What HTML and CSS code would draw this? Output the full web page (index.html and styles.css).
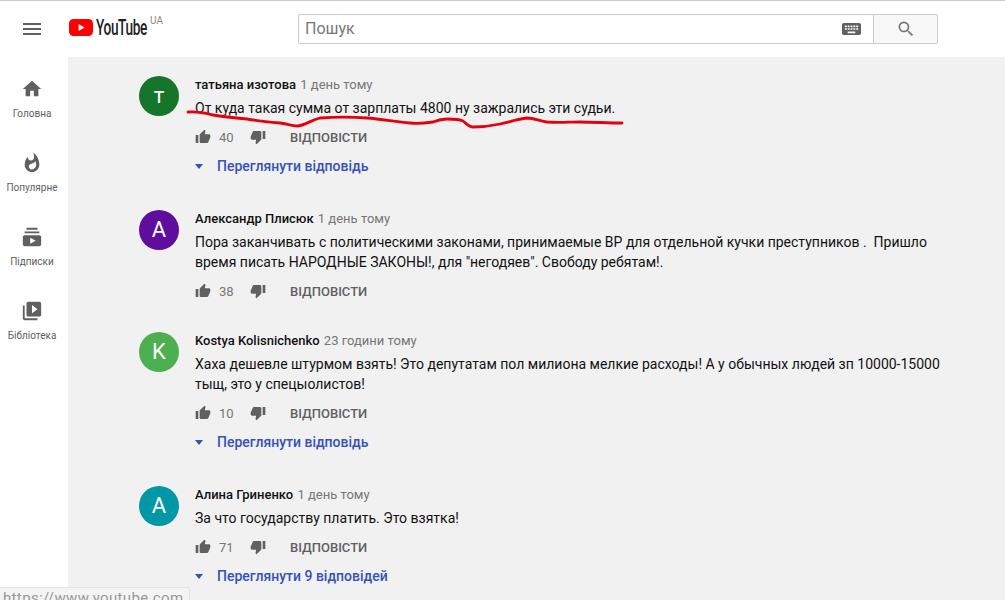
FILE: index.html
```html
<!DOCTYPE html>
<html lang="en">
<head>
    <meta charset="UTF-8">
    <meta name="viewport" content="width=device-width, initial-scale=1.0">
    <title>YouTube</title>
    <link rel="stylesheet" href="styles.css">
</head>
<body>
    <header class="topbar">
        <svg class="menu-icon" viewBox="0 0 24 24"><path d="M3 18h18v-2H3v2zm0-5h18v-2H3v2zm0-7v2h18V6H3z"/></svg>
        <div class="logo">
            <svg class="logo-mark" viewBox="0 0 24 17"><rect width="24" height="17" rx="4.5" fill="#f00"/><path d="M9.6 5v7l6-3.5z" fill="#fff"/></svg>
            <span class="logo-text">YouTube</span>
            <span class="logo-country">UA</span>
        </div>
        <form class="search">
            <div class="search-box">
                <input class="search-input" type="text" placeholder="Пошук">
                <svg class="keyboard-icon" viewBox="2 5 20 14" preserveAspectRatio="none"><path d="M20 5H4c-1.1 0-1.99.9-1.99 2L2 17c0 1.1.9 2 2 2h16c1.1 0 2-.9 2-2V7c0-1.1-.9-2-2-2zm-9 3h2v2h-2V8zm0 3h2v2h-2v-2zM8 8h2v2H8V8zm0 3h2v2H8v-2zm-1 2H5v-2h2v2zm0-3H5V8h2v2zm9 7H8v-2h8v2zm0-4h-2v-2h2v2zm0-3h-2V8h2v2zm3 3h-2v-2h2v2zm0-3h-2V8h2v2z"/></svg>
            </div>
            <button class="search-button" type="button">
                <svg viewBox="0 0 24 24"><path d="M15.5 14h-.79l-.28-.27A6.471 6.471 0 0 0 16 9.5 6.5 6.5 0 1 0 9.5 16c1.61 0 3.09-.59 4.23-1.57l.27.28v.79l5 4.99L20.49 19l-4.99-5zm-6 0C7.01 14 5 11.99 5 9.5S7.01 5 9.5 5 14 7.01 14 9.5 11.99 14 9.5 14z"/></svg>
            </button>
        </form>
    </header>

    <div class="page">
        <nav class="sidebar">
            <a class="nav-item">
                <svg viewBox="0 0 24 24"><path d="M10 20v-6h4v6h5v-8h3L12 3 2 12h3v8z"/></svg>
                <span>Головна</span>
            </a>
            <a class="nav-item">
                <svg viewBox="0 0 24 24"><path d="M13.5.67s.74 2.65.74 4.8c0 2.06-1.35 3.73-3.41 3.73-2.07 0-3.63-1.67-3.63-3.73l.03-.36C5.21 7.51 4 10.62 4 14c0 4.42 3.58 8 8 8s8-3.58 8-8C20 8.61 17.41 3.8 13.5.67zM11.71 19c-1.78 0-3.22-1.4-3.22-3.14 0-1.62 1.05-2.76 2.81-3.12 1.77-.36 3.6-1.21 4.62-2.58.39 1.29.59 2.65.59 4.04 0 2.65-2.15 4.8-4.8 4.8z"/></svg>
                <span>Популярне</span>
            </a>
            <a class="nav-item">
                <svg viewBox="0 0 24 24"><path d="M20 8H4V6h16v2zm-2-6H6v2h12V2zm4 10v8c0 1.1-.9 2-2 2H4c-1.1 0-2-.9-2-2v-8c0-1.1.9-2 2-2h16c1.1 0 2 .9 2 2zm-6 4l-6-3.27v6.53L16 16z"/></svg>
                <span>Підписки</span>
            </a>
            <a class="nav-item">
                <svg viewBox="0 0 24 24"><path d="M4 6H2v14c0 1.1.9 2 2 2h14v-2H4V6zm16-4H8c-1.1 0-2 .9-2 2v12c0 1.1.9 2 2 2h12c1.1 0 2-.9 2-2V4c0-1.1-.9-2-2-2zm-8 12.5v-9l6 4.5-6 4.5z"/></svg>
                <span>Бібліотека</span>
            </a>
        </nav>

        <main class="comments">
            <article class="comment">
                <div class="avatar avatar-green">т</div>
                <div class="comment-body">
                    <div class="comment-head"><b>татьяна изотова</b> <span>1 день тому</span></div>
                    <p class="comment-text">От куда такая сумма от зарплаты 4800 ну зажрались эти судьи.</p>
                    <div class="toolbar">
                        <svg class="thumb" viewBox="0 0 24 24"><path d="M1 21h4V9H1v12zm22-11c0-1.1-.9-2-2-2h-6.31l.95-4.57.03-.32c0-.41-.17-.79-.44-1.06L14.17 1 7.59 7.59C7.22 7.95 7 8.45 7 9v10c0 1.1.9 2 2 2h9c.83 0 1.54-.5 1.84-1.22l3.02-7.05c.09-.23.14-.47.14-.73v-2z"/></svg>
                        <span class="count">40</span>
                        <svg class="thumb thumb-down" viewBox="0 0 24 24"><path d="M15 3H6c-.83 0-1.54.5-1.84 1.22l-3.02 7.05c-.09.23-.14.47-.14.73v2c0 1.1.9 2 2 2h6.31l-.95 4.57-.03.32c0 .41.17.79.44 1.06L9.83 23l6.59-6.59c.36-.36.58-.86.58-1.41V5c0-1.1-.9-2-2-2zm4 0v12h4V3h-4z"/></svg>
                        <span class="reply">ВІДПОВІСТИ</span>
                    </div>
                    <div class="replies"><i class="arrow"></i>Переглянути відповідь</div>
                </div>
            </article>

            <article class="comment">
                <div class="avatar avatar-purple">А</div>
                <div class="comment-body">
                    <div class="comment-head"><b>Александр Плисюк</b> <span>1 день тому</span></div>
                    <p class="comment-text">Пора заканчивать с политическими законами, принимаемые ВР для отдельной кучки преступников .&nbsp; Пришло время писать НАРОДНЫЕ ЗАКОНЫ!, для "негодяев". Свободу ребятам!.</p>
                    <div class="toolbar">
                        <svg class="thumb" viewBox="0 0 24 24"><path d="M1 21h4V9H1v12zm22-11c0-1.1-.9-2-2-2h-6.31l.95-4.57.03-.32c0-.41-.17-.79-.44-1.06L14.17 1 7.59 7.59C7.22 7.95 7 8.45 7 9v10c0 1.1.9 2 2 2h9c.83 0 1.54-.5 1.84-1.22l3.02-7.05c.09-.23.14-.47.14-.73v-2z"/></svg>
                        <span class="count">38</span>
                        <svg class="thumb thumb-down" viewBox="0 0 24 24"><path d="M15 3H6c-.83 0-1.54.5-1.84 1.22l-3.02 7.05c-.09.23-.14.47-.14.73v2c0 1.1.9 2 2 2h6.31l-.95 4.57-.03.32c0 .41.17.79.44 1.06L9.83 23l6.59-6.59c.36-.36.58-.86.58-1.41V5c0-1.1-.9-2-2-2zm4 0v12h4V3h-4z"/></svg>
                        <span class="reply">ВІДПОВІСТИ</span>
                    </div>
                </div>
            </article>

            <article class="comment">
                <div class="avatar avatar-lime">K</div>
                <div class="comment-body">
                    <div class="comment-head"><b>Kostya Kolisnichenko</b> <span>23 години тому</span></div>
                    <p class="comment-text">Хаха дешевле штурмом взять! Это депутатам пол милиона мелкие расходы! А у обычных людей зп 10000-15000 тыщ, это у спецыолистов!</p>
                    <div class="toolbar">
                        <svg class="thumb" viewBox="0 0 24 24"><path d="M1 21h4V9H1v12zm22-11c0-1.1-.9-2-2-2h-6.31l.95-4.57.03-.32c0-.41-.17-.79-.44-1.06L14.17 1 7.59 7.59C7.22 7.95 7 8.45 7 9v10c0 1.1.9 2 2 2h9c.83 0 1.54-.5 1.84-1.22l3.02-7.05c.09-.23.14-.47.14-.73v-2z"/></svg>
                        <span class="count">10</span>
                        <svg class="thumb thumb-down" viewBox="0 0 24 24"><path d="M15 3H6c-.83 0-1.54.5-1.84 1.22l-3.02 7.05c-.09.23-.14.47-.14.73v2c0 1.1.9 2 2 2h6.31l-.95 4.57-.03.32c0 .41.17.79.44 1.06L9.83 23l6.59-6.59c.36-.36.58-.86.58-1.41V5c0-1.1-.9-2-2-2zm4 0v12h4V3h-4z"/></svg>
                        <span class="reply">ВІДПОВІСТИ</span>
                    </div>
                    <div class="replies"><i class="arrow"></i>Переглянути відповідь</div>
                </div>
            </article>

            <article class="comment">
                <div class="avatar avatar-teal">А</div>
                <div class="comment-body">
                    <div class="comment-head"><b>Алина Гриненко</b> <span>1 день тому</span></div>
                    <p class="comment-text">За что государству платить. Это взятка!</p>
                    <div class="toolbar">
                        <svg class="thumb" viewBox="0 0 24 24"><path d="M1 21h4V9H1v12zm22-11c0-1.1-.9-2-2-2h-6.31l.95-4.57.03-.32c0-.41-.17-.79-.44-1.06L14.17 1 7.59 7.59C7.22 7.95 7 8.45 7 9v10c0 1.1.9 2 2 2h9c.83 0 1.54-.5 1.84-1.22l3.02-7.05c.09-.23.14-.47.14-.73v-2z"/></svg>
                        <span class="count">71</span>
                        <svg class="thumb thumb-down" viewBox="0 0 24 24"><path d="M15 3H6c-.83 0-1.54.5-1.84 1.22l-3.02 7.05c-.09.23-.14.47-.14.73v2c0 1.1.9 2 2 2h6.31l-.95 4.57-.03.32c0 .41.17.79.44 1.06L9.83 23l6.59-6.59c.36-.36.58-.86.58-1.41V5c0-1.1-.9-2-2-2zm4 0v12h4V3h-4z"/></svg>
                        <span class="reply">ВІДПОВІСТИ</span>
                    </div>
                    <div class="replies"><i class="arrow"></i>Переглянути 9 відповідей</div>
                </div>
            </article>
        </main>
    </div>

    <!-- hand-drawn red line on top of the first comment -->
    <svg class="scribble" viewBox="0 0 1005 600">
        <path d="M188 112 C198 111 205 113 213 115 C225 117 236 118 247 119 C258 121 269 122 280 123 C287 124 292 126 298 126 C306 125 311 120 320 118 C335 117 352 117 367 118 C382 119 396 122 410 123 C419 124 426 123 433 122 C438 120 442 119 447 119 C453 119 459 119 463 121 C467 124 469 127 473 127 C482 127 491 126 500 124 C509 122 518 119 527 118 C534 118 540 121 547 122 C558 123 569 122 580 122 C594 122 608 123 622 123"/>
    </svg>

    <div class="status-link">https://www.youtube.com</div>
</body>
</html>
```

FILE: styles.css
```css
/* Page */
html, body {
    height: 100%;
}

body {
    margin: 0;
    overflow: hidden;
    background-color: #fff;
    font-family: Roboto, "Noto Sans", sans-serif;
    color: #111;
}

/* Top bar */
.topbar {
    display: flex;
    align-items: center;
    height: 56px;
    padding-left: 20px;
    border-top: 1px solid #ccc;
    background-color: #fff;
}

.menu-icon {
    width: 24px;
    height: 24px;
    fill: #606060;
}

.logo {
    display: flex;
    align-items: flex-start;
    height: 20px;
    margin-left: 25px;
    margin-top: -2px;
}

.logo-mark {
    width: 24px;
    height: 17px;
    margin-top: 1px;
}

.logo-text {
    width: 51px;
    margin-left: 3px;
    font-size: 22px;
    font-weight: 500;
    line-height: 20px;
    letter-spacing: -0.6px;
    color: #222;
    transform: scaleX(0.62);
    transform-origin: left center;
    white-space: nowrap;
}

.logo-country {
    margin-left: 3px;
    margin-top: -3px;
    font-size: 10px;
    line-height: 12px;
    color: #888;
}

.search {
    display: flex;
    height: 30px;
    margin-left: auto;
    margin-right: 67px;
    width: 640px;
}

.search-box {
    display: flex;
    align-items: center;
    flex: 1;
    padding: 0 12px 0 6px;
    border: 1px solid #ccc;
    border-right: none;
    border-radius: 2px 0 0 2px;
    background-color: #fff;
}

.search-input {
    flex: 1;
    border: none;
    outline: none;
    padding: 0 0 2px;
    font-family: Roboto, sans-serif;
    font-size: 16px;
}

.search-input::placeholder {
    color: #777;
}

.keyboard-icon {
    width: 19px;
    height: 12px;
    fill: #606060;
}

.search-button {
    display: flex;
    align-items: center;
    justify-content: center;
    width: 65px;
    padding: 0;
    border: 1px solid #ccc;
    border-radius: 0 2px 2px 0;
    background-color: #f8f8f8;
}

.search-button svg {
    width: 20px;
    height: 20px;
    fill: #777;
}

/* Left menu */
.page {
    display: flex;
    height: calc(100% - 57px);
}

.sidebar {
    flex: 0 0 68px;
    padding-top: 21px;
    background-color: #fff;
}

.nav-item {
    display: flex;
    flex-direction: column;
    align-items: center;
    height: 74px;
    width: 64px;
    font-size: 10px;
    line-height: 14px;
    color: #606060;
    white-space: nowrap;
}

.nav-item svg {
    width: 22px;
    height: 22px;
    margin-bottom: 7px;
    fill: #606060;
}

/* Comments */
.comments {
    flex: 1;
    padding: 19px 60px 0 71px;
    background-color: #f1f1f1;
}

.comment {
    display: flex;
    gap: 16px;
    margin-bottom: 26px;
}

.avatar {
    flex: 0 0 40px;
    height: 40px;
    border-radius: 50%;
    font-size: 22px;
    line-height: 40px;
    text-align: center;
    color: #fff;
}

.avatar-green { background-color: #14752b; }
.avatar-purple { background-color: #5e0d9e; }
.avatar-lime { background-color: #4caf50; }
.avatar-teal { background-color: #0097a7; }

.comment-head {
    height: 18px;
    font-size: 13px;
    line-height: 18px;
}

.comment-head b {
    font-weight: 500;
}

.comment-head span {
    margin-left: 1px;
    color: #767676;
}

.comment-text {
    margin: 4px 0 0;
    font-size: 14px;
    line-height: 20px;
    color: #111;
}

.toolbar {
    display: flex;
    align-items: center;
    height: 28px;
    margin: 5px 0 1px;
}

.thumb {
    width: 16px;
    height: 16px;
    fill: #606060;
}

.count {
    width: 31px;
    margin-left: 8px;
    font-size: 13px;
    color: #767676;
}

.thumb-down {
    margin-right: 24px;
}

.reply {
    font-size: 13px;
    font-weight: 500;
    color: #606060;
}

.replies {
    display: flex;
    align-items: center;
    height: 28px;
    margin-bottom: 4px;
    font-size: 14px;
    font-weight: 500;
    color: #3651b8;
}

.arrow {
    width: 0;
    height: 0;
    margin-right: 14px;
    border-top: 5px solid #3651b8;
    border-left: 4.5px solid transparent;
    border-right: 4.5px solid transparent;
}

/* Overlays */
.scribble {
    position: absolute;
    top: 0;
    left: 0;
    width: 1005px;
    height: 600px;
    pointer-events: none;
}

.scribble path {
    fill: none;
    stroke: #e5000f;
    stroke-width: 2.8;
    stroke-linecap: round;
}

.status-link {
    position: absolute;
    left: 0;
    bottom: 0;
    width: 186px;
    height: 12px;
    padding-left: 3px;
    border: 1px solid #e4e4e4;
    border-left: none;
    border-bottom: none;
    border-radius: 0 3px 0 0;
    background-color: #f4f4f4;
    font-size: 15px;
    line-height: 21px;
    letter-spacing: 0.35px;
    color: #999;
    overflow: hidden;
}
```
